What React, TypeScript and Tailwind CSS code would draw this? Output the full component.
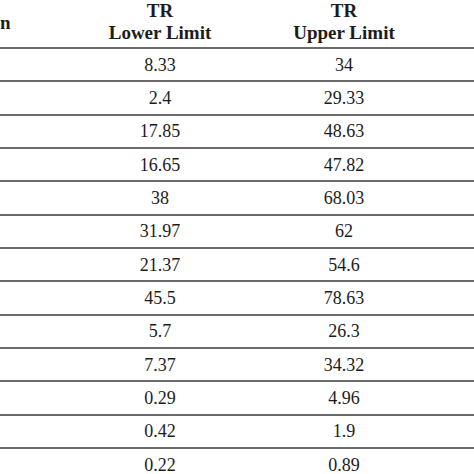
const ROWS: [string, string][] = [
  ["8.33", "34"],
  ["2.4", "29.33"],
  ["17.85", "48.63"],
  ["16.65", "47.82"],
  ["38", "68.03"],
  ["31.97", "62"],
  ["21.37", "54.6"],
  ["45.5", "78.63"],
  ["5.7", "26.3"],
  ["7.37", "34.32"],
  ["0.29", "4.96"],
  ["0.42", "1.9"],
  ["0.22", "0.89"],
];

export default function App() {
  return (
    <div
      className="h-[474px] w-[474px] overflow-hidden bg-white text-[#1c1c1c]"
      style={{ fontFamily: '"Liberation Serif", "DejaVu Serif", serif' }}
    >
      <div className="grid h-[47px] grid-cols-[70px_180px_188px_1fr] items-center text-[19px] font-bold leading-[22px]">
        <div className="mt-[-2px] pl-0">n</div>
        <div className="mt-[-4px] flex flex-col items-center">
          <span>TR</span>
          <span>Lower Limit</span>
        </div>
        <div className="mt-[-4px] flex flex-col items-center">
          <span>TR</span>
          <span>Upper Limit</span>
        </div>
        <div />
      </div>
      {ROWS.map(([lo, hi], i) => (
        <div
          key={i}
          className="grid h-[33.33px] grid-cols-[70px_180px_188px_1fr] items-center border-t-2 border-[#6a6a6a] text-[18px] leading-none"
        >
          <div />
          <div className="text-center">{lo}</div>
          <div className="text-center">{hi}</div>
          <div />
        </div>
      ))}
    </div>
  );
}
